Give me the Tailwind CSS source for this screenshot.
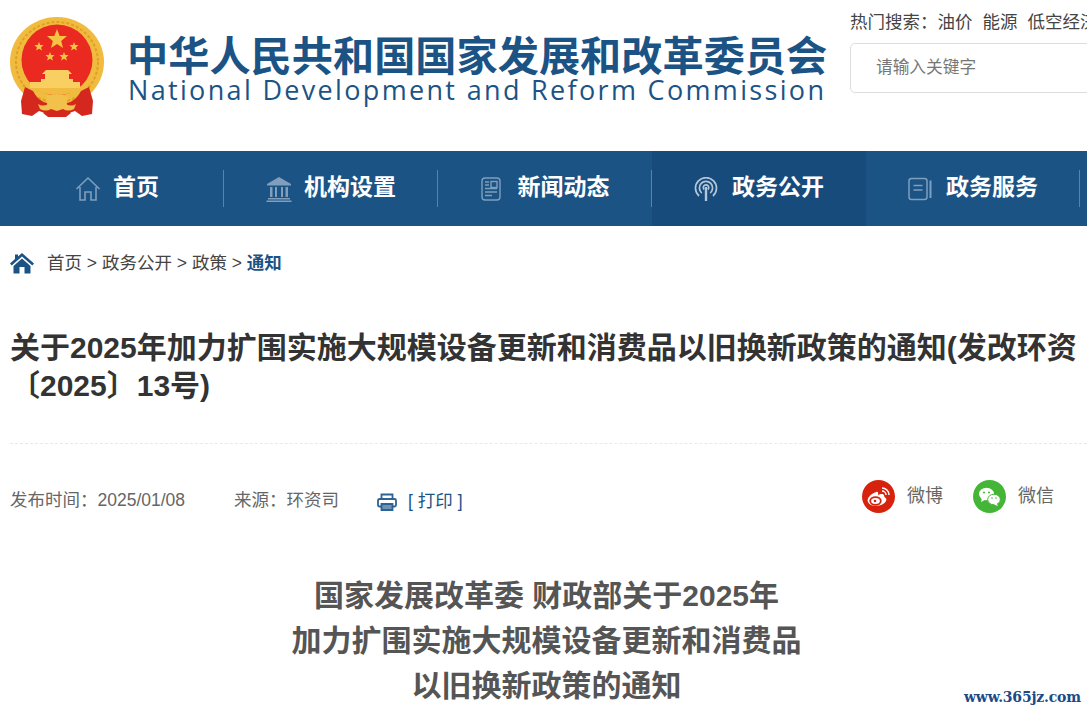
<!DOCTYPE html>
<html lang="zh-CN">
<head>
<meta charset="utf-8">
<title>通知</title>
<script src="https://cdn.jsdelivr.net/npm/@tailwindcss/browser@4"></script>
</head>
<body class="bg-white overflow-hidden">
<div class="relative w-[1087px] h-[712px] overflow-hidden bg-white font-['Liberation_Sans','Noto_Sans_CJK_SC',sans-serif] text-[#333]">

  <header class="h-[151px] flex pl-[10px]">
    <svg class="w-[95px] h-[101px] mt-[17px] shrink-0" viewBox="0 0 95 101">
      <ellipse cx="47" cy="45" rx="47" ry="45" fill="#f0bb3e"/>
      <ellipse cx="47" cy="45" rx="41" ry="40" fill="none" stroke="#e0a024" stroke-width="2" stroke-dasharray="3 2"/>
      <circle cx="47" cy="43" r="35.500" fill="#ea2a21"/>
      <polygon points="47,12 49.700,19 57,19 51.200,24 53,31 47,27 41,31 42.800,24 37,19 44.300,19" fill="#f6c445"/>
      <polygon points="29,25 30.200,28 33.500,28 31,30.500 32,33.500 29,31.700 26,33.500 27,30.500 24.500,28 27.800,28" fill="#f6c445"/>
      <polygon points="64,25 65.200,28 68.500,28 66,30.500 67,33.500 64,31.700 61,33.500 62,30.500 59.500,28 62.800,28" fill="#f6c445"/>
      <polygon points="40,35 41.200,38 44.500,38 42,40.500 43,43.500 40,41.700 37,43.500 38,40.500 35.500,38 38.800,38" fill="#f6c445"/>
      <polygon points="54,35 55.200,38 58.500,38 56,40.500 57,43.500 54,41.700 51,43.500 52,40.500 49.500,38 52.800,38" fill="#f6c445"/>
      <path d="M36 53 H58 L62 57 H59 V62 H63 V65 H70 V71 H20 V65 H31 V62 H35 V57 H32Z" fill="#f8cf60"/>
      <path d="M22 71 H72 Q62 78 47 78 Q32 78 22 71Z" fill="#f0bb3e"/>
      <path d="M15 70 L23 74 Q28 84 37 86 L38 97 L29 94 L22 99 L12 97 L11 84Z" fill="#d4281f"/>
      <path d="M79 70 L71 74 Q66 84 57 86 L56 97 L65 94 L72 99 L82 97 L83 84Z" fill="#d4281f"/>
      <path d="M33 96 L38 92 H56 L61 96 L56 100 H38Z" fill="#d4281f"/>
      <path d="M28 87 Q33 90 38 87 L36 80 Q41 76 47 78 Q53 76 58 80 L56 87 Q61 90 66 87 L64 92 Q58 95 53 92 L47 94 L41 92 Q36 95 30 92Z" fill="#f2c14b"/>
    </svg>
    <div class="ml-[22px] w-[702px] shrink-0 pt-[38px]">
      <div class="text-[41.200px] leading-[38px] font-bold text-[#1c5385] whitespace-nowrap">中华人民共和国国家发展和改革委员会</div>
      <div class="pl-[1px] text-[27px] leading-[28px] text-[#1c5385] whitespace-nowrap tracking-[2.330px] font-['Open_Sans',sans-serif]">National Development and Reform Commission</div>
    </div>
    <div class="ml-[21px] shrink-0 pt-[11px]">
      <div class="text-[17.500px] leading-[22px] text-[#444] whitespace-nowrap flex gap-[10px]"><span>热门搜索：油价</span><span>能源</span><span>低空经济</span></div>
      <div class="mt-[10px] w-[300px] h-[50px] border border-[#ddd] rounded-[5px] pl-[25px] flex items-center text-[16.700px] text-[#777]">请输入关键字</div>
    </div>
  </header>

  <nav class="h-[75px] bg-[#1c5385] pl-[10px] flex text-white text-[23px] font-bold">
    <a class="w-[214px] h-full flex items-center justify-center gap-[12px] relative">
      <svg class="w-[26px] h-[26px]" viewBox="0 0 26 26" fill="none" stroke="#7f9fbd" stroke-width="1.600"><path d="M1.500 13 L13 2 L24.500 13 M5 11 V24 H10 V16 H16 V24 H21 V11"/></svg>
      <span class="mt-[-2px]">首页</span>
      <i class="absolute right-0 top-[19px] w-px h-[37px] bg-[#5b83a8]"></i>
    </a>
    <a class="w-[214px] h-full flex items-center justify-center gap-[12px] relative">
      <svg class="w-[26px] h-[26px]" viewBox="0 0 26 26" fill="#7f9fbd"><path d="M13 1 L25 8 V9.500 H1 V8Z"/><path d="M4 11 h2.500 v10 H4z M9 11 h2 v10 H9z M15 11 h2 v10 h-2z M19.500 11 H22 v10 h-2.500z M2 22 H24 v1.500 H2z M0.500 24.500 H25.500 V26 H0.500z"/></svg>
      <span class="mt-[-2px]">机构设置</span>
      <i class="absolute right-0 top-[19px] w-px h-[37px] bg-[#5b83a8]"></i>
    </a>
    <a class="w-[214px] h-full flex items-center justify-center gap-[17px] relative">
      <svg class="w-[20px] h-[24px]" viewBox="0 0 20 24" fill="none" stroke="#7f9fbd" stroke-width="1.400"><rect x="1" y="1" width="18" height="22" rx="3"/><rect x="10" y="4.500" width="6" height="6"/><path d="M4 5 H8 M4 8 H8 M4 11.500 H16 M4 15 H16 M4 18.500 H11"/></svg>
      <span class="mt-[-2px]">新闻动态</span>
      <i class="absolute right-0 top-[19px] w-px h-[37px] bg-[#5b83a8]"></i>
    </a>
    <a class="w-[214px] h-full flex items-center justify-center gap-[14px] relative bg-[#174b7b]">
      <svg class="w-[24px] h-[24px]" viewBox="0 0 24 24" fill="none" stroke="#b4c6d8" stroke-width="1.700"><path d="M5 19 A10.500 10.500 0 1 1 19 19"/><path d="M7.800 16 A6.600 6.600 0 1 1 16.200 16"/><path d="M10.200 12.500 A2.700 2.700 0 1 1 13.800 12.500"/><path d="M12 10 V24" stroke-width="2.400"/></svg>
      <span class="mt-[-2px]">政务公开</span>
    </a>
    <a class="w-[214px] h-full flex items-center justify-center gap-[14px] relative">
      <svg class="w-[24px] h-[24px]" viewBox="0 0 24 24" fill="none" stroke="#7f9fbd" stroke-width="1.500"><rect x="1" y="1.500" width="18" height="21" rx="2.500"/><path d="M5.500 8.500 H14.500 M5.500 13 H14.500"/><path d="M22.500 3.500 V21" stroke-width="2"/></svg>
      <span class="mt-[-2px]">政务服务</span>
      <i class="absolute right-0 top-[19px] w-px h-[37px] bg-[#5b83a8]"></i>
    </a>
  </nav>

  <div class="pl-[10px] pt-[25px] h-[72px] flex items-start text-[17.500px] leading-[24px] text-[#444]">
    <svg class="w-[24px] h-[22px] mr-[13px] mt-px" viewBox="0 0 24 22" fill="#1c5385"><path d="M12 1 L24 11.500 L22.300 13.500 L12 4.500 L1.700 13.500 L0 11.500 L5 7 V2.500 H8 V4.400Z"/><path d="M12 6.500 L20.500 14 V21.500 H14.500 V15 H9.500 V21.500 H3.500 V14Z"/></svg>
    <span class="whitespace-nowrap">首页 &gt; 政务公开 &gt; 政策 &gt; <b class="text-[#1c5385] font-bold">通知</b></span>
  </div>

  <main class="pl-[10px]">
    <h1 class="w-[1072px] text-[30px] leading-[38px] font-bold text-[#333] pt-[31px]">关于2025年加力扩围实施大规模设备更新和消费品以旧换新政策的通知(发改环资〔2025〕13号)</h1>
    <div class="mt-[38px] border-t border-dashed border-[#e9e9e9]"></div>
    <div class="mt-[34px] h-[53px] flex items-start relative text-[17.500px] text-[#666] leading-[44px]">
      <span class="whitespace-nowrap mr-[49px]">发布时间：2025/01/08</span>
      <span class="whitespace-nowrap mr-[38px]">来源：环资司</span>
      <svg class="w-[20px] h-[18px] mt-[15px] mr-[11px]" viewBox="0 0 20 18" fill="none" stroke="#2e6292" stroke-width="1.800"><path d="M4.500 6 V1.500 H15.500 V6"/><rect x="1" y="6" width="18" height="7.500" rx="1.500"/><path d="M4.500 11 V17 H15.500 V11 Z" fill="#6d94b6"/></svg>
      <span class="whitespace-nowrap text-[#1c5385] pt-px">[ 打印 ]</span>
      <div class="absolute left-[852px] top-0 flex items-center h-[33px] gap-[30px] text-[#666] text-[18px] leading-[33px] mt-[2px]">
        <span class="flex items-center gap-[12px]">
          <svg class="w-[33px] h-[33px]" viewBox="0 0 33 33"><circle cx="16.500" cy="16.500" r="16.500" fill="#d7230e"/><path d="M14 12 C8 14 4.500 19 6 22 C7.500 26 14 27 19 25 C24 23 26 19 23 17.500 C22 17 22.500 15.500 21.500 14.500 C20 13.500 17.500 14.500 16 15 C16.500 12.500 16 11 14 12Z" fill="#fff"/><ellipse cx="13.500" cy="21" rx="5.300" ry="3.800" fill="none" stroke="#d7230e" stroke-width="1.800"/><circle cx="13" cy="21" r="1.300" fill="#d7230e"/><path d="M20 8 A7 7 0 0 1 27 15 M20 11 A4 4 0 0 1 24 15" fill="none" stroke="#fff" stroke-width="1.500"/></svg>
          微博
        </span>
        <span class="flex items-center gap-[12px]">
          <svg class="w-[33px] h-[33px]" viewBox="0 0 33 33"><circle cx="16.500" cy="16.500" r="16.500" fill="#44b536"/><ellipse cx="13.500" cy="14" rx="7.500" ry="6.300" fill="#fff"/><path d="M9 18 L8 22 L12.500 19.500Z" fill="#fff"/><ellipse cx="21" cy="19.500" rx="6.300" ry="5.300" fill="#fff" stroke="#44b536" stroke-width="1"/><path d="M23.500 23 L25 26 L21 24.500Z" fill="#fff"/><circle cx="11" cy="12.500" r="1" fill="#44b536"/><circle cx="16" cy="12.500" r="1" fill="#44b536"/><circle cx="19" cy="18" r=".8" fill="#44b536"/><circle cx="23" cy="18" r=".8" fill="#44b536"/></svg>
          微信
        </span>
      </div>
    </div>
  </main>

  <article class="mt-[43px] w-[1087px] pl-[6px] text-center text-[30px] leading-[45px] font-bold text-[#555]">
    <p class="mt-[-1px]">国家发展改革委 财政部关于2025年</p>
    <p>加力扩围实施大规模设备更新和消费品</p>
    <p>以旧换新政策的通知</p>
  </article>

  <div class="absolute left-[964px] top-[688px] text-[14px] leading-[18px] font-bold text-[#1c4a86] font-['DejaVu_Serif',serif] whitespace-nowrap tracking-[-0.200px]">www.365jz.com</div>
</div>
</body>
</html>
